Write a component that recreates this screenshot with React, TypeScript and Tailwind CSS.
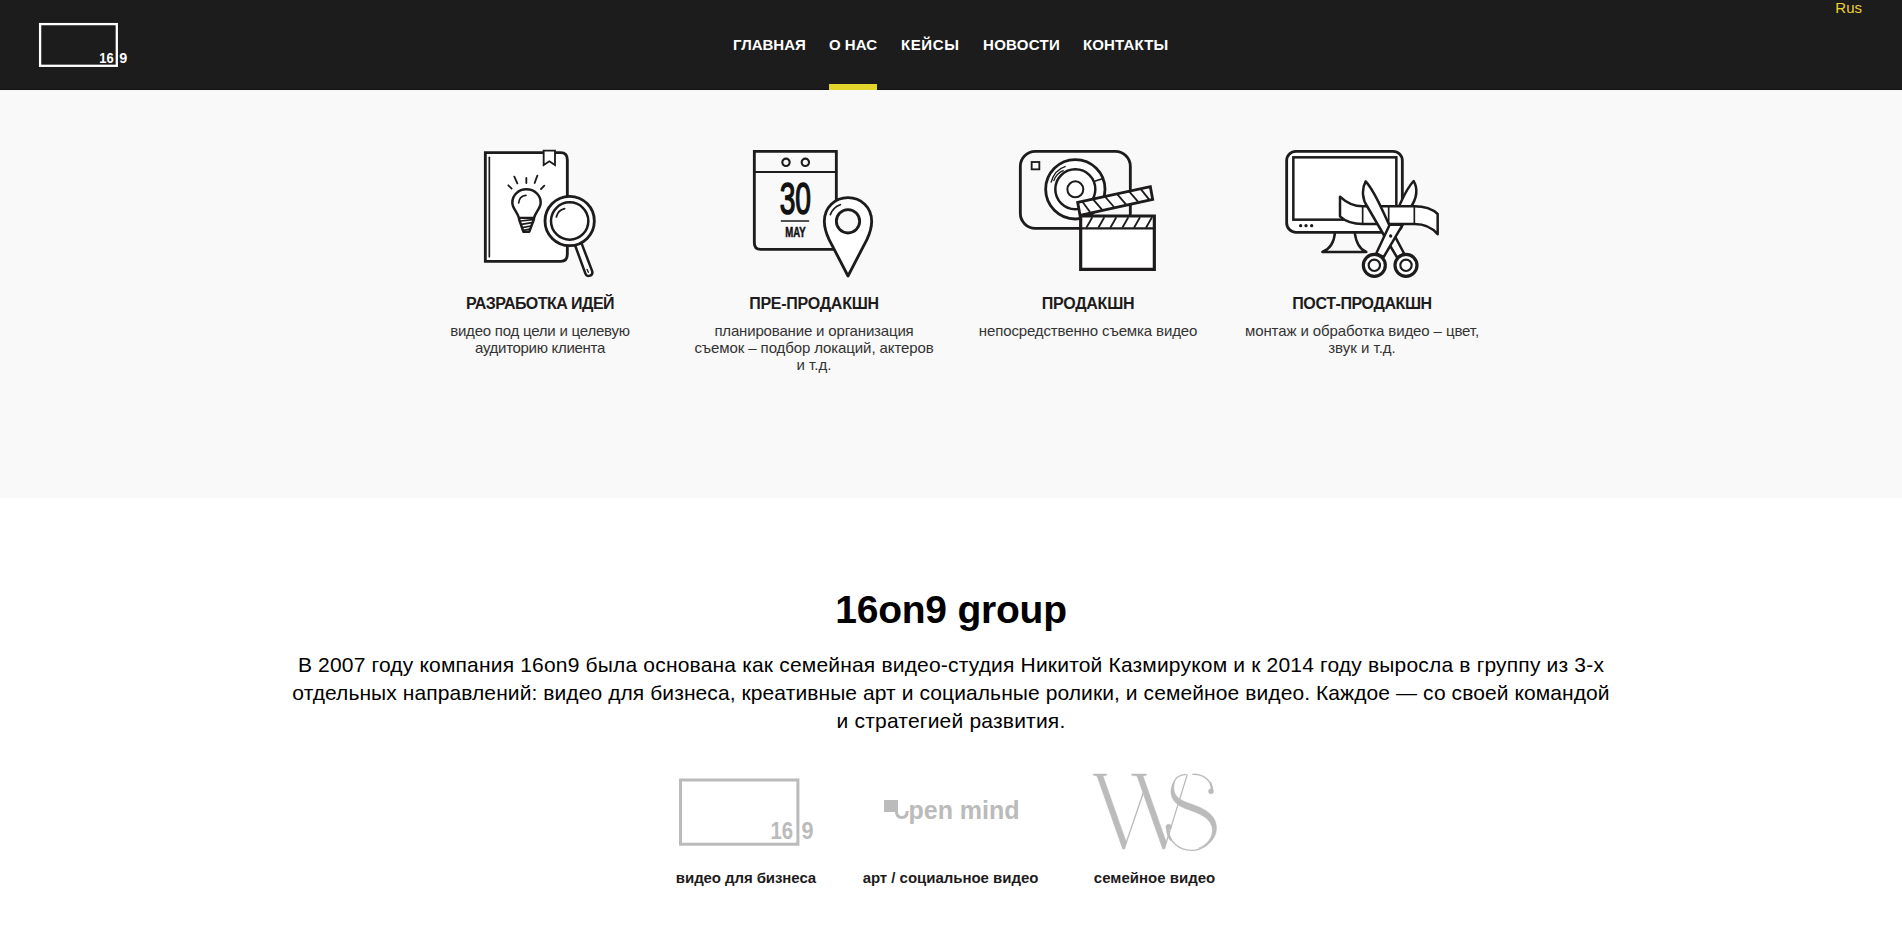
import type { ReactNode } from "react";

const INK = "#1d1b1b";
const GREY = "#bbbbbb";

function IdeaIcon() {
  return (
    <svg width="140" height="145" viewBox="0 0 420 435" fill="none" stroke={INK} strokeWidth="8.5" strokeLinejoin="round" strokeLinecap="round">
      <path d="M46 38H272Q292 38 292 60V342Q292 364 272 364H46Z" fill="#fff" strokeLinejoin="miter" />
      <path d="M58 52V350" strokeWidth="5" />
      <path d="M221 32H255V75L238 64L221 75Z" fill="#fff" strokeWidth="5.5" strokeLinejoin="miter" />
      <path d="M169 114V129M133 110L142 130M202 107L194 129M115 136L125 146M223 137L213 147" strokeWidth="5.5" />
      <path d="M147 234C142 215 127 205 127 188C127 165 146 148 169 148C193 148 212 165 212 188C212 205 196 217 192 234Z" fill="#fff" strokeWidth="7.5" />
      <path d="M147 237L160 275H178L192 237" fill="#fff" strokeWidth="7.5" />
      <path d="M146 189C147 174 156 167 168 166" strokeWidth="5" />
      <path d="M151 243L188 239M154 253L186 248M157 263L182 258M160 271L179 267" strokeWidth="5" />
      <path d="M316 318L346 400Q350 411 360 407Q370 403 366 392L335 311" fill="#fff" strokeWidth="7.5" />
      <circle cx="299" cy="243" r="74" fill="#fff" />
      <circle cx="299" cy="243" r="56" fill="#fff" strokeWidth="7.5" />
      <path d="M259 231C262 217 271 209 284 206" strokeWidth="5" />
      <path d="M351 388L355 397" strokeWidth="4" />
    </svg>
  );
}

function CalendarIcon() {
  return (
    <svg width="148" height="145" viewBox="0 0 444 435" fill="none" stroke={INK} strokeWidth="8.5" strokeLinejoin="round" strokeLinecap="round">
      <path d="M43 34H289V328H62Q43 328 43 308Z" strokeLinejoin="miter" />
      <path d="M43 96H289" strokeWidth="6" />
      <circle cx="138" cy="67" r="11" strokeWidth="6.5" />
      <circle cx="196" cy="67" r="11" strokeWidth="6.5" />
      <text x="119" y="221" textLength="94" lengthAdjust="spacingAndGlyphs" fontFamily="Liberation Sans" fontSize="131" fill="#111" stroke="#111" strokeWidth="4.5">30</text>
      <path d="M124 243H206" strokeWidth="4" />
      <text x="136" y="291" textLength="61" lengthAdjust="spacingAndGlyphs" fontFamily="Liberation Sans" fontWeight="700" fontSize="42" fill="#111" stroke="#111" strokeWidth="1.5">MAY</text>
      <path d="M324 408L267 298C258 279 253 262 253 244C253 202 285 173 324 173C363 173 395 202 395 244C395 262 390 279 381 298Z" fill="#fff" />
      <circle cx="324" cy="244" r="35" fill="#f9f9f9" />
      <path d="M271 224C277 208 286 199 301 194" strokeWidth="5" />
    </svg>
  );
}

function CameraIcon() {
  return (
    <svg width="156" height="145" viewBox="0 0 468 435" fill="none" stroke={INK} strokeWidth="8.5" strokeLinejoin="miter">
      <rect x="31" y="34" width="330" height="231" rx="45" />
      <rect x="65" y="66" width="23" height="22" strokeWidth="5.5" />
      <circle cx="196" cy="148" r="89" fill="#fff" />
      <circle cx="196" cy="148" r="60" fill="#fff" strokeWidth="7.5" />
      <circle cx="196" cy="148" r="24" strokeWidth="6" />
      <path d="M123 128C129 104 144 86 167 79M131 123C136 108 148 96 161 91" strokeWidth="4" />
      <path d="M254 124L277 116" strokeWidth="5" />
      <path d="M203 187L421 140L428 178L210 226Z" fill="#fff" />
      <path d="M218 186L240 216M250 179L276 209M286 171L312 201M322 163L348 193M358 155L384 185M393 148L417 178" strokeWidth="5.5" />
      <path d="M212 228H433V388H212Z" fill="#fff" strokeWidth="9.5" />
      <path d="M212 265H433" strokeWidth="7" />
      <path d="M247 232L229 263M283 232L265 263M319 232L301 263M355 232L337 263M390 232L372 263M426 232L408 263" strokeWidth="5.5" />
    </svg>
  );
}

function MonitorIcon() {
  return (
    <svg width="174" height="145" viewBox="0 0 522 435" fill="none" stroke={INK} strokeWidth="8.5" strokeLinejoin="round" strokeLinecap="round">
      <path d="M180 277C178 300 168 326 142 336H274C249 326 242 300 239 277" strokeWidth="7.5" />
      <rect x="35" y="34" width="347" height="243" rx="28" fill="#fff" />
      <rect x="55" y="52" width="309" height="187" fill="#fff" strokeWidth="7.5" strokeLinejoin="miter" />
      <g fill={INK} stroke="none">
        <circle cx="77" cy="257" r="5" />
        <circle cx="93" cy="257" r="5" />
        <circle cx="110" cy="257" r="5" />
      </g>
      <path d="M416 123C386 155 380 190 352 238L327 290L346 300L407 202C425 175 430 148 416 123Z" fill="#fff" strokeWidth="7.5" />
      <path d="M195 170C218 192 238 199 263 199H418C448 199 472 207 488 222V283C470 260 446 252 418 252H263C235 252 212 245 195 229Z" fill="#fff" strokeWidth="7.5" />
      <path d="M263 199V250M341 199V252M418 199V252" strokeWidth="5" />
      <path d="M272 124C258 150 264 182 276 198L337 303L366 352L388 342L354 278C322 216 305 160 272 124Z" fill="#fff" strokeWidth="7.5" />
      <path d="M344 254L304 340L326 351L383 254Z" fill="#fff" strokeWidth="7.5" />
      <circle cx="347" cy="288" r="5" fill={INK} stroke="none" />
      <circle cx="298" cy="376" r="33" fill="#fff" strokeWidth="9.5" />
      <circle cx="298" cy="376" r="17" strokeWidth="6.5" />
      <circle cx="393" cy="376" r="33" fill="#fff" strokeWidth="9.5" />
      <circle cx="393" cy="376" r="17" strokeWidth="6.5" />
    </svg>
  );
}

function HeaderLogo() {
  return (
    <svg width="92" height="46" viewBox="38 22 92 46" fontFamily="Liberation Sans" fontWeight="700" fontSize="15" fill="#fff">
      <rect x="40.1" y="24.1" width="76.7" height="41.7" fill="none" stroke="#fff" strokeWidth="2.3" />
      <text x="99.2" y="62.6" textLength="14.4" lengthAdjust="spacingAndGlyphs">16</text>
      <text x="119.2" y="62.6" textLength="8" lengthAdjust="spacingAndGlyphs">9</text>
    </svg>
  );
}

function BusinessLogo() {
  return (
    <svg width="141" height="82" viewBox="676 770 141 82" fontFamily="Liberation Sans" fontWeight="700" fontSize="23.5" fill={GREY}>
      <rect x="680.5" y="780" width="117.4" height="64.2" fill="none" stroke={GREY} strokeWidth="3" />
      <text x="770.5" y="838.8" textLength="22.5" lengthAdjust="spacingAndGlyphs">16</text>
      <text x="801.5" y="838.8" textLength="12" lengthAdjust="spacingAndGlyphs">9</text>
    </svg>
  );
}

function OpenMindLogo() {
  return (
    <svg width="176" height="82" viewBox="863 770 176 82" fontFamily="Liberation Sans" fontWeight="700" fontSize="25.5" fill={GREY}>
      <rect x="884" y="800" width="14" height="12" />
      <path d="M896.3 810C896.3 815.5 898.5 817.6 901.8 817.6C905.3 817.6 907.2 815.5 907.2 811" fill="none" stroke={GREY} strokeWidth="3" />
      <text x="908.5" y="818.6" textLength="111" lengthAdjust="spacingAndGlyphs">pen mind</text>
    </svg>
  );
}

function FamilyLogo() {
  return (
    <svg width="140" height="82" viewBox="0 15 420 246" fill={GREY} stroke={GREY}>
      <g strokeWidth="1.5">
        <path d="M25 27H65V31L54 33L124 232L119 252H113L36 33L25 31Z" />
        <path d="M140 27H184V31L174 33L244 232L239 252H233L156 33L140 31Z" />
        <path d="M270 46C248 76 256 108 290 126C320 140 370 148 381 185C388 216 365 240 340 250C375 242 398 215 394 182C390 142 345 126 310 114C280 103 258 90 270 46Z" />
        <circle cx="378" cy="79" r="7.5" />
        <circle cx="251" cy="186" r="8.5" />
      </g>
      <g fill="none" strokeWidth="4">
        <path d="M118 250L176 80M239 248L307 28" />
        <path d="M262 62C268 42 282 28 304 28M322 28C350 26 376 42 383 72" />
        <path d="M388 200C380 238 350 256 320 256C282 256 252 232 249 190" />
      </g>
      <path d="M376 52L382 78M246 188C247 206 252 218 258 226" fill="none" strokeWidth="6" />
    </svg>
  );
}

function Line({ className, children }: { className: string; children: ReactNode }) {
  return <span className={`block whitespace-nowrap ${className}`}>{children}</span>;
}

const nav = [
  { label: "ГЛАВНАЯ", cls: "w-[72px]" },
  { label: "О НАС", cls: "w-[48px]", active: true },
  { label: "КЕЙСЫ", cls: "w-[58px] tracking-[0.6px]" },
  { label: "НОВОСТИ", cls: "w-[76px] tracking-[0.3px]" },
  { label: "КОНТАКТЫ", cls: "w-[86px] tracking-[0.15px]" },
];

const services = [
  {
    icon: <IdeaIcon />,
    title: "РАЗРАБОТКА ИДЕЙ",
    cls: "tracking-[-0.55px]",
    lines: [
      { text: "видео под цели и целевую", cls: "tracking-[-0.22px]" },
      { text: "аудиторию клиента", cls: "tracking-[-0.3px]" },
    ],
  },
  {
    icon: <CalendarIcon />,
    title: "ПРЕ-ПРОДАКШН",
    cls: "tracking-[-0.26px]",
    lines: [
      { text: "планирование и организация", cls: "tracking-[-0.17px]" },
      { text: "съемок – подбор локаций, актеров", cls: "tracking-[-0.1px]" },
      { text: "и т.д.", cls: "" },
    ],
  },
  {
    icon: <CameraIcon />,
    title: "ПРОДАКШН",
    cls: "tracking-[-0.25px]",
    lines: [{ text: "непосредственно съемка видео", cls: "tracking-[-0.13px]" }],
  },
  {
    icon: <MonitorIcon />,
    title: "ПОСТ-ПРОДАКШН",
    cls: "tracking-[-0.41px]",
    lines: [
      { text: "монтаж и обработка видео – цвет,", cls: "tracking-[-0.1px]" },
      { text: "звук и т.д.", cls: "" },
    ],
  },
];

const brands = [
  { logo: <BusinessLogo />, label: "видео для бизнеса", cls: "w-[141px] tracking-[-0.08px]" },
  { logo: <OpenMindLogo />, label: "арт / социальное видео", cls: "w-[176px] tracking-[-0.03px]" },
  { logo: <FamilyLogo />, label: "семейное видео", cls: "w-[140px]" },
];

export default function App() {
  return (
    <div className="h-[950px] overflow-hidden bg-white font-['Liberation_Sans',Arial,sans-serif] text-[15px] leading-[17px] text-[#1d1b1b]">
      <header className="grid h-[90px] grid-cols-[1fr_auto_1fr] border-b border-[#141114] bg-[#1c1c1c]">
        <a className="pt-[22px] pl-[38px]">
          <HeaderLogo />
        </a>
        <nav className="-mb-px flex gap-6 font-bold text-white">
          {nav.map((item) => (
            <a
              key={item.label}
              className={`flex flex-col justify-between whitespace-nowrap pt-9 ${item.cls}`}
            >
              {item.label}
              {item.active && <span className="h-1.5 bg-[#e4d52d]" />}
            </a>
          ))}
        </nav>
        <div className="-mt-px pr-10 text-right text-[#f1d22e]">Rus</div>
      </header>

      <section className="flex h-[408px] justify-center bg-[#f9f9f9] pt-[50px]">
        {services.map((s) => (
          <article key={s.title} className="flex w-[274px] flex-col items-center text-center">
            {s.icon}
            <h3 className={`mt-2.5 text-base leading-[18px] font-bold ${s.cls}`}>{s.title}</h3>
            <p className="mt-[9px] text-[#333]">
              {s.lines.map((l) => (
                <Line key={l.text} className={l.cls}>
                  {l.text}
                </Line>
              ))}
            </p>
          </article>
        ))}
      </section>

      <section className="flex flex-col items-center pt-[90px] text-center text-black">
        <h2 className="text-[39px] leading-[43px] font-bold tracking-[-0.22px]">16on9 group</h2>
        <p className="mt-5 text-[21px] leading-7">
          <Line className="tracking-[0.182px]">
            В 2007 году компания 16on9 была основана как семейная видео-студия Никитой Казмируком и к 2014 году выросла в группу из 3-х
          </Line>
          <Line className="tracking-[0.089px]">
            отдельных направлений: видео для бизнеса, креативные арт и социальные ролики, и семейное видео. Каждое — со своей командой
          </Line>
          <Line className="tracking-[0.2px]">и стратегией развития.</Line>
        </p>
        <div className="mt-[35px] mr-0.5 flex gap-[46px] font-bold text-[#1d1b1b]">
          {brands.map((b) => (
            <figure key={b.label} className={`flex flex-col items-center whitespace-nowrap ${b.cls}`}>
              {b.logo}
              <figcaption className="mt-[17px]">{b.label}</figcaption>
            </figure>
          ))}
        </div>
      </section>
    </div>
  );
}
